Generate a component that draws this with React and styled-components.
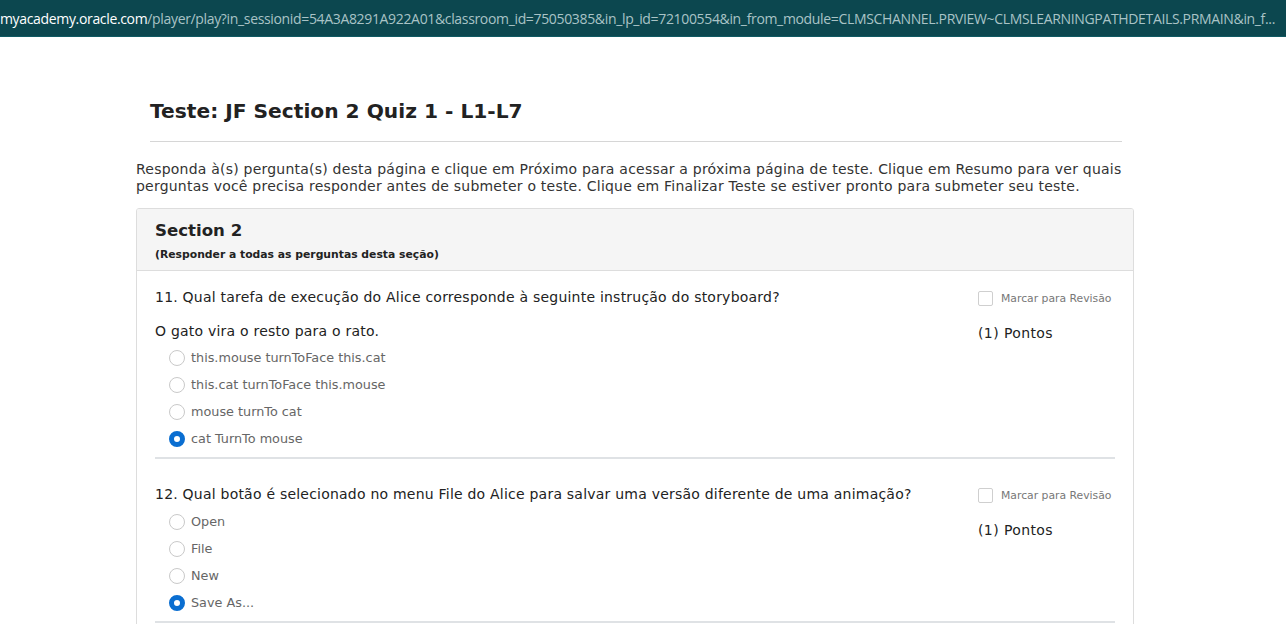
import React from 'react'
import styled, { createGlobalStyle } from 'styled-components'

const GlobalStyle = createGlobalStyle`
  html, body { margin: 0; padding: 0; background: #fff; }
  body { font-family: "DejaVu Sans", Verdana, sans-serif; color: #222; }
`

const UrlBar = styled.div`
  height: 36px;
  background: #0c474f;
  border-bottom: 1px solid #0f5a63;
  display: flex;
  align-items: center;
  white-space: nowrap;
  overflow: hidden;
  font-family: "Open Sans", "Liberation Sans", sans-serif;
  font-size: 14px;
  letter-spacing: -0.34px;
  color: #a9c3c6;
`
const Host = styled.span`
  color: #fff;
`

const Page = styled.div`
  width: 998px;
  margin-left: 136px;
  padding-top: 60px;
`

const Title = styled.h1`
  margin: 0 12px 0 14px;
  padding-bottom: 16px;
  border-bottom: 1px solid #d6d6d6;
  font-size: 20.2px;
  font-weight: bold;
  color: #222;
  line-height: 28px;
`

const Intro = styled.p`
  margin: 19px 0 13px;
  font-size: 14px;
  line-height: 17px;
  letter-spacing: 0.22px;
  color: #333;
`

const Panel = styled.div`
  border: 1px solid #ddd;
  border-radius: 3px;
  overflow: hidden;
`

const PanelHead = styled.div`
  background: #f5f5f5;
  border-bottom: 1px solid #ddd;
  padding: 11px 18px 7px;
`
const SectionName = styled.div`
  font-size: 16.6px;
  font-weight: bold;
  color: #222;
  line-height: 22px;
`
const SectionNote = styled.div`
  margin-top: 5px;
  font-size: 10.8px;
  font-weight: bold;
  color: #222;
  line-height: 16px;
`

const PanelBody = styled.div`
  padding: 0 18px 24px;
`

const Question = styled.div`
  display: flex;
  border-bottom: 2px solid #dfe2e5;
  padding-top: ${p => p.$top}px;
  padding-bottom: 5px;
`
const QMain = styled.div`
  flex: 1;
`
const QText = styled.div`
  font-size: 14px;
  line-height: 17px;
  letter-spacing: 0.22px;
  color: #222;
`
const QStem = styled.div`
  margin-top: 17px;
  font-size: 14px;
  line-height: 17px;
  letter-spacing: 0.22px;
  color: #222;
`
const Options = styled.div`
  margin-top: ${p => p.$gap}px;
  padding-left: 14px;
  display: flex;
  flex-direction: column;
`
const Option = styled.label`
  display: flex;
  align-items: center;
  height: 27px;
  font-size: 12.8px;
  color: #666;
`
const Radio = styled.span`
  width: 16px;
  height: 16px;
  box-sizing: border-box;
  border-radius: 50%;
  margin-right: 6px;
  border: ${p => (p.$on ? '5px solid #0a6ed1' : '1px solid #c9c9c9')};
  background: #fff;
`

const QSide = styled.div`
  width: 137px;
  padding-left: 5px;
`
const Review = styled.label`
  display: flex;
  align-items: center;
  height: 17px;
  margin-top: 1px;
  font-size: 10.8px;
  color: #777;
`
const Box = styled.span`
  width: 15px;
  height: 15px;
  box-sizing: border-box;
  border: 1px solid #cfcfcf;
  border-radius: 2px;
  margin-right: 8px;
`
const Points = styled.div`
  margin-top: 18px;
  font-size: 14px;
  line-height: 17px;
  letter-spacing: 0.4px;
  color: #222;
`

const questions = [
  {
    n: 11,
    text: 'Qual tarefa de execução do Alice corresponde à seguinte instrução do storyboard?',
    stem: 'O gato vira o resto para o rato.',
    options: ['this.mouse turnToFace this.cat', 'this.cat turnToFace this.mouse', 'mouse turnTo cat', 'cat TurnTo mouse'],
    picked: 3,
    top: 18,
  },
  {
    n: 12,
    text: 'Qual botão é selecionado no menu File do Alice para salvar uma versão diferente de uma animação?',
    options: ['Open', 'File', 'New', 'Save As...'],
    picked: 3,
    top: 27,
  },
]

const App = () => {
  return (
    <>
      <GlobalStyle />
      <UrlBar>
        <Host>myacademy.oracle.com</Host>
        /player/play?in_sessionid=54A3A8291A922A01&amp;classroom_id=75050385&amp;in_lp_id=72100554&amp;in_from_module=CLMSCHANNEL.PRVIEW~CLMSLEARNINGPATHDETAILS.PRMAIN&amp;in_f...
      </UrlBar>
      <Page>
        <Title>Teste: JF Section 2 Quiz 1 - L1-L7</Title>
        <Intro>
          Responda à(s) pergunta(s) desta página e clique em Próximo para acessar a próxima página de teste. Clique em Resumo para ver quais perguntas você precisa responder antes de submeter o teste. Clique em Finalizar Teste se estiver pronto para submeter seu teste.
        </Intro>
        <Panel>
          <PanelHead>
            <SectionName>Section 2</SectionName>
            <SectionNote>(Responder a todas as perguntas desta seção)</SectionNote>
          </PanelHead>
          <PanelBody>
            {questions.map(q => (
              <Question key={q.n} $top={q.top}>
                <QMain>
                  <QText>{q.n}. {q.text}</QText>
                  {q.stem && <QStem>{q.stem}</QStem>}
                  <Options $gap={q.stem ? 4 : 5}>
                    {q.options.map((o, i) => (
                      <Option key={o}>
                        <Radio $on={i === q.picked} />
                        {o}
                      </Option>
                    ))}
                  </Options>
                </QMain>
                <QSide>
                  <Review>
                    <Box />
                    Marcar para Revisão
                  </Review>
                  <Points>(1) Pontos</Points>
                </QSide>
              </Question>
            ))}
          </PanelBody>
        </Panel>
      </Page>
    </>
  )
}

export default App
